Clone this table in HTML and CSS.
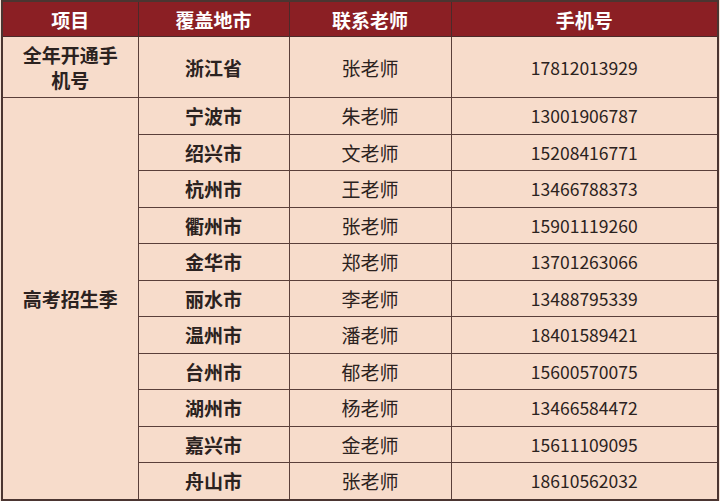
FILE: index.html
```html
<!DOCTYPE html>
<html lang="zh">
<head>
<meta charset="utf-8">
<link rel="stylesheet" href="styles.css">
</head>
<body>
<table class="tbl">
  <colgroup>
    <col class="c1"><col class="c2"><col class="c3"><col class="c4">
  </colgroup>
  <thead>
    <tr class="head"><th>项目</th><th>覆盖地市</th><th>联系老师</th><th>手机号</th></tr>
  </thead>
  <tbody>
    <tr class="first"><td class="b">全年开通手<br>机号</td><td class="b">浙江省</td><td>张老师</td><td class="num">17812013929</td></tr>
    <tr><td class="b" rowspan="11">高考招生季</td><td class="b">宁波市</td><td>朱老师</td><td class="num">13001906787</td></tr>
    <tr><td class="b">绍兴市</td><td>文老师</td><td class="num">15208416771</td></tr>
    <tr><td class="b">杭州市</td><td>王老师</td><td class="num">13466788373</td></tr>
    <tr><td class="b">衢州市</td><td>张老师</td><td class="num">15901119260</td></tr>
    <tr><td class="b">金华市</td><td>郑老师</td><td class="num">13701263066</td></tr>
    <tr><td class="b">丽水市</td><td>李老师</td><td class="num">13488795339</td></tr>
    <tr><td class="b">温州市</td><td>潘老师</td><td class="num">18401589421</td></tr>
    <tr><td class="b">台州市</td><td>郁老师</td><td class="num">15600570075</td></tr>
    <tr><td class="b">湖州市</td><td>杨老师</td><td class="num">13466584472</td></tr>
    <tr><td class="b">嘉兴市</td><td>金老师</td><td class="num">15611109095</td></tr>
    <tr><td class="b">舟山市</td><td>张老师</td><td class="num">18610562032</td></tr>
  </tbody>
</table>
</body>
</html>
```
FILE: styles.css
```css
html, body {
  margin: 0;
  padding: 0;
  background: #f6e3d7;
}
body {
  padding: 0 0 0 1px;
  font-family: "Noto Sans CJK SC", "Noto Sans", sans-serif;
}
.tbl {
  border-collapse: collapse;
  table-layout: fixed;
  width: 716px;
  background: #f7dccb;
  color: #2b2220;
  font-size: 19px;
  border: 2px solid #4b3531;
}
.c1 { width: 136px; }
.c2 { width: 151px; }
.c3 { width: 162px; }
.c4 { width: 267px; }
.tbl th, .tbl td {
  border: 1.5px solid #5a3f3a;
  text-align: center;
  vertical-align: middle;
  padding: 0;
  line-height: 25px;
}
.head th {
  background: #8b1f24;
  color: #fff;
  font-weight: 700;
  height: 34px;
  border-color: #4b2a2a;
}
.tbl tbody tr td { height: 35.5px; }
.tbl tbody tr.first td { height: 60px; }
.b { font-weight: 700; }
.num { font-size: 17.5px; }
```
